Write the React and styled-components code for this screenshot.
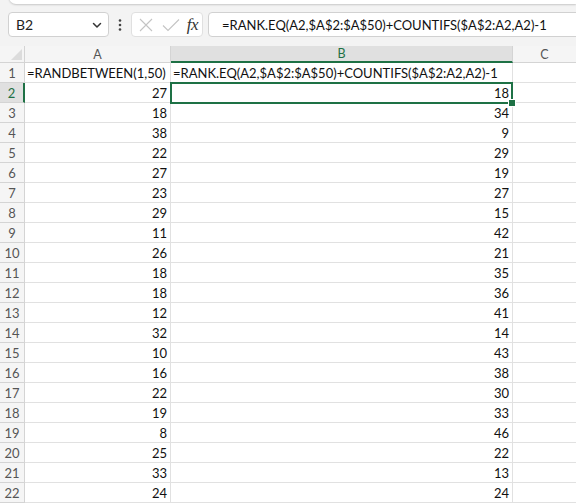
import React from 'react';
import styled, { createGlobalStyle } from 'styled-components';

const GREEN = '#1e7145';
const GRID = '#e1e1e1';
const HEAD_LINE = '#d4d4d4';

const GlobalStyle = createGlobalStyle`
  html, body {
    margin: 0;
    padding: 0;
    background: #fff;
    overflow: hidden;
  }
  body {
    font-family: Lato, 'Liberation Sans', Arial, sans-serif;
  }
`;

const Page = styled.div`
  width: 576px;
  height: 503px;
  overflow: hidden;
  background: #f3f3f3;
`;

const RibbonEdge = styled.div`
  height: 20px;
  margin-top: -16px;
  margin-left: 9px;
  background: #fff;
  border-bottom-left-radius: 7px;
  box-shadow: 0 1px 2px rgba(0, 0, 0, 0.18);
`;

const FormulaBar = styled.div`
  display: flex;
  align-items: center;
  height: 25px;
  margin-top: 8px;
  padding-left: 8px;

  & > * {
    flex: none;
  }
`;

const NameBox = styled.div`
  box-sizing: border-box;
  width: 101px;
  height: 25px;
  display: flex;
  align-items: center;
  justify-content: space-between;
  padding: 0 5px 0 7px;
  background: #fff;
  border: 1px solid #d1d1d1;
  border-radius: 4px;
  font-size: 14px;
  color: #222;
`;

const Dots = styled.div`
  width: 22px;
  display: flex;
  justify-content: center;
  color: #444;
`;

const ButtonGroup = styled.div`
  box-sizing: border-box;
  width: 72px;
  height: 25px;
  display: flex;
  align-items: center;
  justify-content: space-between;
  padding: 0 4px 0 5px;
  background: #fff;
  border: 1px solid #e0e0e0;
  border-radius: 4px;
`;

const Fx = styled.span`
  font-family: 'Liberation Serif', 'DejaVu Serif', serif;
  font-style: italic;
  font-size: 17px;
  color: #333;
  letter-spacing: -0.5px;
`;

const FormulaInput = styled.div`
  box-sizing: border-box;
  width: 380px;
  height: 25px;
  margin-left: 5px;
  display: flex;
  align-items: center;
  padding-left: 13px;
  background: #fff;
  border: 1px solid #d1d1d1;
  border-radius: 4px;
  font-size: 13px;
  color: #111;
  white-space: nowrap;
`;

const Sheet = styled.div`
  position: relative;
  margin-top: 9px;
  display: grid;
  grid-template-columns: 25px 146px 342px 64px;
  grid-template-rows: 17px;
  grid-auto-rows: 20px;
  background: #fff;
`;

const Corner = styled.div`
  position: relative;
  background: #f5f5f5;
  border-right: 1px solid ${HEAD_LINE};
  border-bottom: 1px solid ${HEAD_LINE};
  box-sizing: border-box;

  &::after {
    content: '';
    position: absolute;
    right: 2px;
    bottom: 2px;
    width: 0;
    height: 0;
    border-left: 11px solid transparent;
    border-bottom: 11px solid #dcdcdc;
  }
`;

const ColHead = styled.div`
  box-sizing: border-box;
  display: flex;
  align-items: center;
  justify-content: center;
  font-size: 12.5px;
  color: ${(p) => (p.$active ? GREEN : '#555')};
  background: ${(p) => (p.$active ? '#e0e0e0' : '#f5f5f5')};
  border-right: 1px solid ${HEAD_LINE};
  border-bottom: ${(p) => (p.$active ? `2px solid ${GREEN}` : `1px solid ${HEAD_LINE}`)};
`;

const RowHead = styled.div`
  box-sizing: border-box;
  display: flex;
  align-items: center;
  justify-content: center;
  padding-top: 1px;
  font-size: 13px;
  color: ${(p) => (p.$active ? GREEN : '#555')};
  background: ${(p) => (p.$active ? '#e0e0e0' : '#f5f5f5')};
  border-right: ${(p) => (p.$active ? `2px solid ${GREEN}` : `1px solid ${HEAD_LINE}`)};
  border-bottom: 1px solid ${HEAD_LINE};
`;

const Cell = styled.div`
  box-sizing: border-box;
  display: flex;
  align-items: center;
  justify-content: ${(p) => (p.$num ? 'flex-end' : 'flex-start')};
  padding: 1px 3px 0 2px;
  font-size: 13px;
  color: #111;
  white-space: nowrap;
  overflow: visible;
  border-right: 1px solid ${GRID};
  border-bottom: 1px solid ${GRID};
`;

const Selection = styled.div`
  position: absolute;
  left: 170px;
  top: 36px;
  width: 343px;
  height: 22px;
  box-sizing: border-box;
  border: 2px solid ${GREEN};
  pointer-events: none;

  &::after {
    content: '';
    position: absolute;
    right: -5px;
    bottom: -5px;
    width: 6px;
    height: 6px;
    background: ${GREEN};
    border: 1px solid #fff;
  }
`;

const colA = [27, 18, 38, 22, 27, 23, 29, 11, 26, 18, 18, 12, 32, 10, 16, 22, 19, 8, 25, 33, 24];
const colB = [18, 34, 9, 29, 19, 27, 15, 42, 21, 35, 36, 41, 14, 43, 38, 30, 33, 46, 22, 13, 24];

const FORMULA = '=RANK.EQ(A2,$A$2:$A$50)+COUNTIFS($A$2:A2,A2)-1';

const Chevron = () => (
  <svg width="12" height="12" viewBox="0 0 12 12">
    <path d="M2.5 4.5 L6 8 L9.5 4.5" fill="none" stroke="#333" strokeWidth="1.5" strokeLinecap="round" strokeLinejoin="round" />
  </svg>
);

const Cross = () => (
  <svg width="18" height="16" viewBox="0 0 18 16">
    <path d="M3 2 L15 14 M15 2 L3 14" stroke="#c4c4c4" strokeWidth="1.1" />
  </svg>
);

const Check = () => (
  <svg width="20" height="16" viewBox="0 0 20 16">
    <path d="M2 8.5 L7 13.5 L18 2.5" fill="none" stroke="#c4c4c4" strokeWidth="1.1" />
  </svg>
);

const VDots = () => (
  <svg width="4" height="14" viewBox="0 0 4 14">
    <circle cx="2" cy="2.5" r="1.3" fill="#444" />
    <circle cx="2" cy="7" r="1.3" fill="#444" />
    <circle cx="2" cy="11.5" r="1.3" fill="#444" />
  </svg>
);

export default function App() {
  return (
    <Page>
      <GlobalStyle />
      <RibbonEdge />
      <FormulaBar>
        <NameBox>
          <span>B2</span>
          <Chevron />
        </NameBox>
        <Dots>
          <VDots />
        </Dots>
        <ButtonGroup>
          <Cross />
          <Check />
          <Fx>fx</Fx>
        </ButtonGroup>
        <FormulaInput>{FORMULA}</FormulaInput>
      </FormulaBar>

      <Sheet>
        <Corner />
        <ColHead>A</ColHead>
        <ColHead $active>B</ColHead>
        <ColHead>C</ColHead>

        <RowHead>1</RowHead>
        <Cell>=RANDBETWEEN(1,50)</Cell>
        <Cell>{FORMULA}</Cell>
        <Cell />

        {colA.map((a, i) => (
          <React.Fragment key={i}>
            <RowHead $active={i === 0}>{i + 2}</RowHead>
            <Cell $num>{a}</Cell>
            <Cell $num>{colB[i]}</Cell>
            <Cell />
          </React.Fragment>
        ))}
        <Selection />
      </Sheet>
    </Page>
  );
}
